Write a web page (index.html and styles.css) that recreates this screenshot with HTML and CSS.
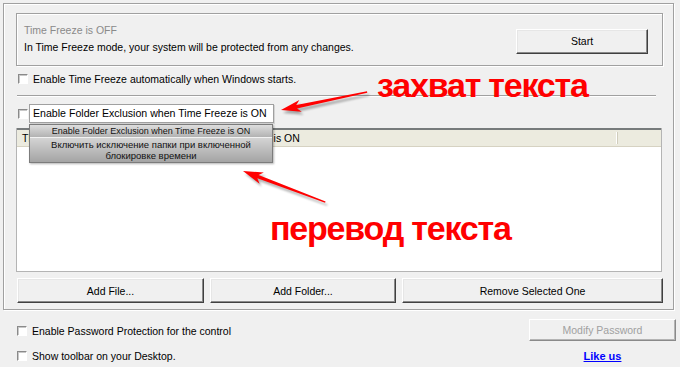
FILE: index.html
```html
<!DOCTYPE html>
<html lang="en">
<head>
    <meta charset="UTF-8">
    <title>Time Freeze</title>
    <link rel="stylesheet" href="styles.css">
</head>
<body>
    <div class="screen">
        <div class="panel">
            <div class="status">
                <div class="status-text">
                    <div class="status-title">Time Freeze is OFF</div>
                    <div>In Time Freeze mode, your system will be protected from any changes.</div>
                </div>
                <button class="btn start">Start</button>
            </div>
            <label class="check auto"><span class="box"></span>Enable Time Freeze automatically when Windows starts.</label>
            <div class="sep"></div>
            <label class="check exclusion"><span class="box"></span><span class="captured">Enable Folder Exclusion when Time Freeze is ON</span></label>
            <div class="list">
                <div class="list-head">
                    <span class="col-main">The following folders are excluded when Time Freeze is ON</span>
                </div>
                <div class="list-body"></div>
                <div class="popup">
                    <div class="popup-src">Enable Folder Exclusion when Time Freeze is ON</div>
                    <div class="popup-dst">Включить исключение папки при включенной<br>блокировке времени</div>
                </div>
            </div>
            <div class="actions">
                <button class="btn add-file">Add File...</button>
                <button class="btn add-folder">Add Folder...</button>
                <button class="btn remove">Remove Selected One</button>
            </div>
        </div>
        <div class="footer">
            <div class="footer-left">
                <label class="check"><span class="box"></span>Enable Password Protection for the control</label>
                <label class="check"><span class="box"></span>Show toolbar on your Desktop.</label>
            </div>
            <div class="footer-right">
                <button class="btn modify" disabled>Modify Password</button>
                <a class="like" href="#">Like us</a>
            </div>
        </div>

        <!-- annotations -->
        <svg class="notes" width="680" height="367" viewBox="0 0 680 367">
            <defs>
                <polygon id="arrow" points="0,0 20,-6 16,-1.8 88,-0.7 88,0.7 16,1.8 20,6"/>
                <filter id="soft"><feGaussianBlur stdDeviation="1"/></filter>
            </defs>
            <g filter="url(#soft)" fill="#000" opacity="0.3">
                <use href="#arrow" transform="translate(283 113) rotate(-11.8)"/>
                <use href="#arrow" transform="translate(245 174) rotate(20.7)"/>
            </g>
            <g fill="#f00">
                <use href="#arrow" transform="translate(281 110) rotate(-11.8)"/>
                <use href="#arrow" transform="translate(243 171) rotate(20.7)"/>
            </g>
        </svg>
        <div class="note note-capture">захват текста</div>
        <div class="note note-translate">перевод текста</div>
    </div>
</body>
</html>
```

FILE: styles.css
```css
body {
    margin: 0;
    font-family: 'Liberation Sans', Arial, sans-serif;
    font-size: 10.5px;
    color: #000;
    background-color: #f0f0f0;
}

.screen {
    position: relative;
    width: 680px;
    height: 367px;
    padding-top: 3px;
    box-sizing: border-box;
    overflow: hidden;
}

.panel {
    margin-left: 3px;
    width: 671px;
    height: 307px;
    box-sizing: border-box;
    padding: 9px 10px 6px 12px;
    border: 1px solid #a0a0a0;
    box-shadow: inset 1px 1px 0 #fff, 1px 1px 0 #fff;
}

.status {
    display: flex;
    justify-content: space-between;
    height: 53px;
    box-sizing: border-box;
    padding: 8px 14px 0 7px;
    line-height: 17px;
    border: 1px solid #a0a0a0;
    box-shadow: inset 1px 1px 0 #fff, 1px 1px 0 #fff;
}

.status-title {
    color: #8a8a8a;
}

.btn {
    font: inherit;
    color: #000;
    background: #f0f0f0;
    padding: 0;
    border: 1px solid;
    border-color: #fff #404040 #404040 #fff;
    box-shadow: inset -1px -1px 0 #8a8a8a, inset 1px 1px 0 #e6e6e6;
}

.start {
    width: 132px;
    height: 25px;
    margin-top: 7px;
}

.check {
    display: flex;
    align-items: center;
    gap: 5px;
    height: 18px;
}

.box {
    width: 10px;
    height: 10px;
    margin-left: 2px;
    box-sizing: border-box;
    background: #fff;
    border: 1px solid;
    border-color: #8a8a8a #fff #fff #8a8a8a;
    box-shadow: inset 1px 1px 0 #c8c8c8;
}

.auto {
    margin-top: 4px;
}

.sep {
    height: 2px;
    margin: 7px 7px 0 1px;
    box-sizing: border-box;
    border-top: 1px solid #a0a0a0;
    border-bottom: 1px solid #fff;
}

.exclusion {
    margin-top: 7px;
    height: 19px;
    gap: 1px;
}

.captured {
    width: 245px;
    height: 19px;
    box-sizing: border-box;
    padding-left: 3px;
    line-height: 17px;
    font-size: 10.6px;
    background: #fff;
    border: 1px solid #a0a0a0;
    box-shadow: 1px 1px 0 #d4d4d4;
}

.list {
    position: relative;
    display: flex;
    flex-direction: column;
    width: 646px;
    height: 144px;
    margin-top: 5px;
    box-sizing: border-box;
    background: #fff;
    border: 1px solid #b4b4b4;
    border-top: 0;
}

.list-head {
    display: flex;
    align-items: center;
    height: 19px;
    box-sizing: border-box;
    background: #ecebdf;
    border-top: 2px solid #777b7c;
    border-bottom: 1px solid #d6d2c2;
}

.col-main {
    width: 594px;
    height: 12px;
    padding-left: 5px;
    line-height: 12px;
    white-space: nowrap;
    border-right: 1px solid #fff;
    box-shadow: 1px 0 0 #d0cdbd;
}

.popup {
    position: absolute;
    top: -4px;
    left: 12px;
    width: 244px;
    box-sizing: border-box;
    font-size: 9.5px;
    text-align: center;
    color: #111;
    border: 1px solid #7c7c7c;
    box-shadow: 1px 1px 2px rgba(0, 0, 0, 0.3);
}

.popup-src {
    height: 12px;
    line-height: 12px;
    font-size: 9px;
    background: linear-gradient(#dedede, #b2b2b2);
    border-bottom: 1px solid #f2f2f2;
}

.popup-dst {
    padding: 1px 0;
    line-height: 11px;
    background: linear-gradient(#d4d4d4, #a4a4a4);
}

.actions {
    display: flex;
    gap: 6px;
    height: 25px;
    margin: 6px 0 0 1px;
}

.add-file {
    width: 187px;
}

.add-folder {
    width: 186px;
}

.remove {
    flex: 1;
}

.footer {
    display: flex;
    justify-content: space-between;
    padding: 0 4px 0 15px;
}

.footer-left {
    display: flex;
    flex-direction: column;
    gap: 7px;
    padding-top: 12px;
}

.footer-right {
    display: flex;
    flex-direction: column;
    align-items: center;
    margin-top: 9px;
}

.modify {
    width: 147px;
    height: 22px;
    color: #a0a0a0;
    border-color: #fff #8a8a8a #8a8a8a #fff;
    box-shadow: inset -1px -1px 0 #b4b4b4;
}

.like {
    margin-top: 7px;
    line-height: 16px;
    font-size: 11px;
    font-weight: bold;
    color: #0000ff;
    text-decoration: underline;
}

.notes {
    position: absolute;
    top: 0;
    left: 0;
    pointer-events: none;
}

.note {
    position: absolute;
    font-size: 34px;
    line-height: 34px;
    font-weight: bold;
    letter-spacing: -1.2px;
    color: #f00;
    white-space: nowrap;
}

.note-capture {
    left: 377px;
    top: 68px;
}

.note-translate {
    left: 270px;
    top: 211px;
}
```
